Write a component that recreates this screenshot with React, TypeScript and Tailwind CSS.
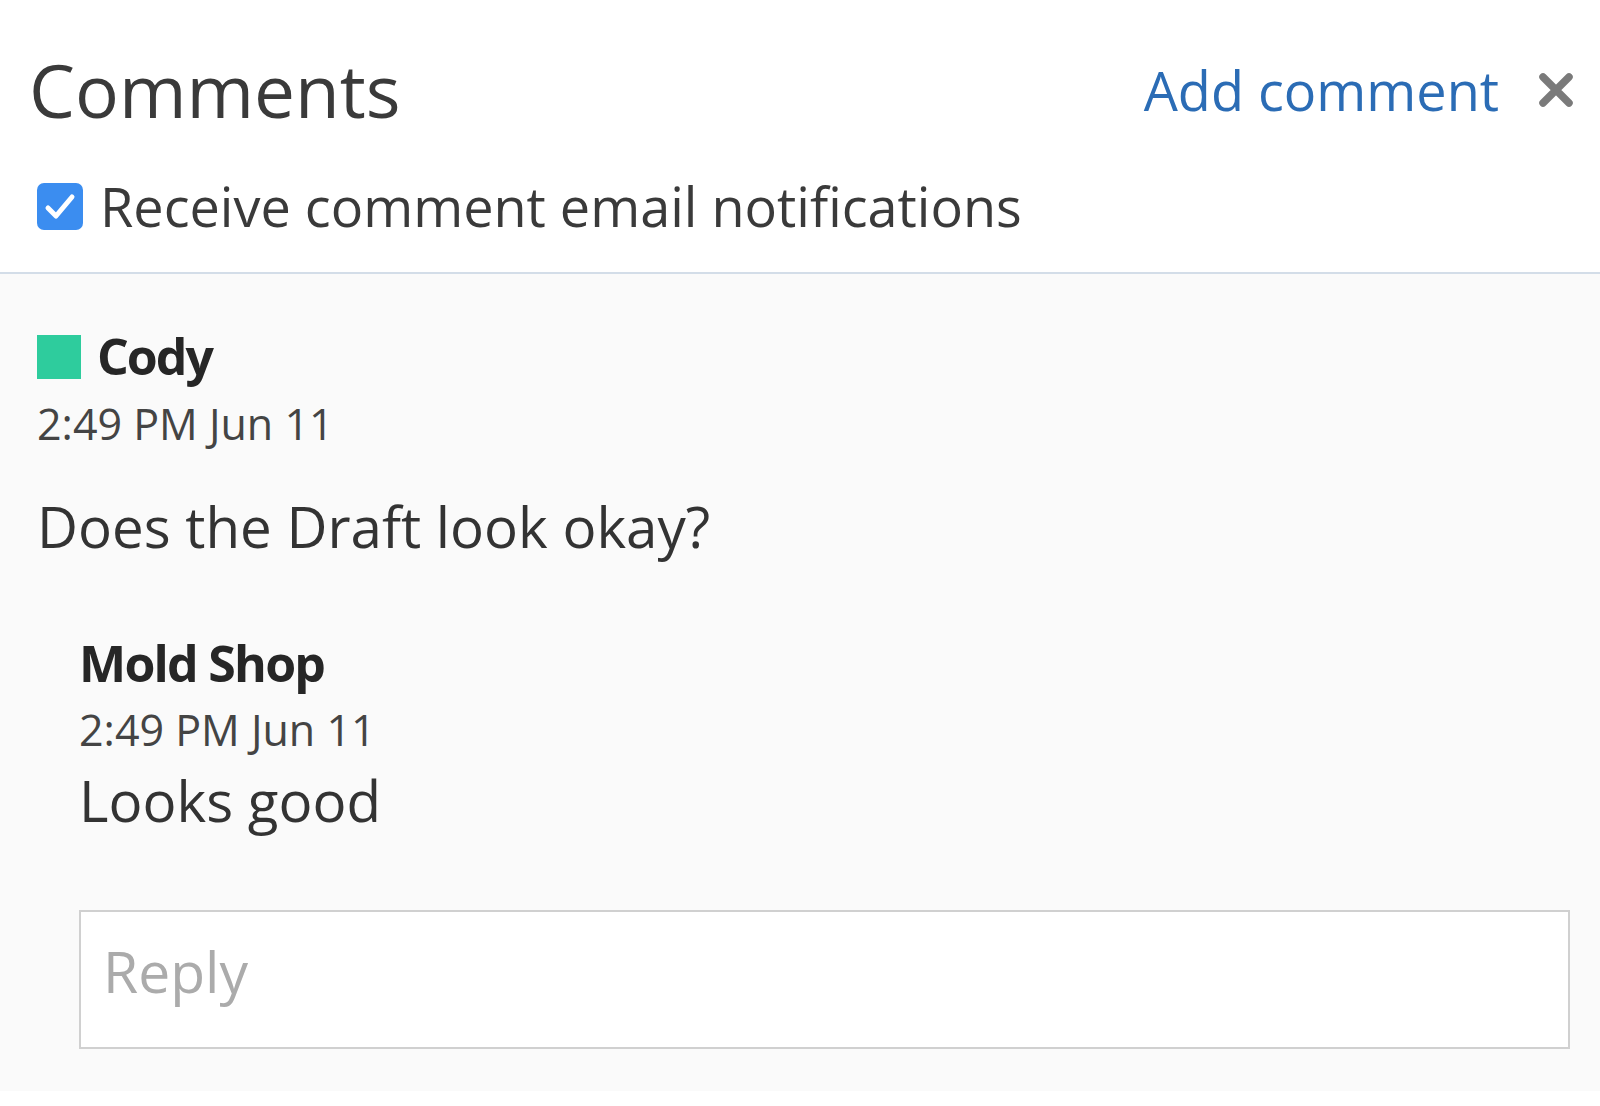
import React from 'react';

const CloseIcon: React.FC = () => (
  <svg width="38" height="36" viewBox="0 0 38 36" className="shrink-0">
    <path d="M6 5 L32 31 M32 5 L6 31" stroke="#7a7a7a" strokeWidth="7.5" strokeLinecap="round" />
  </svg>
);

const CheckBox: React.FC = () => (
  <span className="flex h-[47px] w-[46px] shrink-0 items-center justify-center rounded-[7px] bg-[#3b8df0]">
    <svg width="36" height="36" viewBox="0 0 36 36">
      <path d="M6 19 L14 27 L30 8" fill="none" stroke="#fff" strokeWidth="5" strokeLinecap="round" strokeLinejoin="round" />
    </svg>
  </span>
);

const App: React.FC = () => {
  return (
    <div className="min-h-screen bg-white font-['Open_Sans','Noto_Sans',sans-serif] text-[#333]">
      {/* header */}
      <div className="border-b-2 border-[#d3dde8] pt-[41px] pb-[30px] pl-[29px] pr-[25px]">
        <div className="flex items-center justify-between">
          <h1 className="text-[73px] leading-[98px] text-[#3a3a3a]">Comments</h1>
          <div className="flex items-center gap-[38px]">
            <a className="cursor-pointer text-[54px] leading-[72px] text-[#2b6cb5]">Add comment</a>
            <CloseIcon />
          </div>
        </div>
        <label className="mt-[32px] flex items-center gap-[17px] pl-[8px]">
          <CheckBox />
          <span className="text-[54px] leading-[71px] text-[#3a3a3a]">
            Receive comment email notifications
          </span>
        </label>
      </div>

      {/* thread */}
      <div className="bg-[#fafafa] pt-[50px] pb-[42px] pl-[37px] pr-[30px]">
        <div className="flex items-center gap-[16px]">
          <span className="h-[44px] w-[44px] shrink-0 bg-[#2ecc9d]" />
          <span className="text-[50px] font-bold leading-[65px] tracking-[-0.04em] text-[#262626]">
            Cody
          </span>
        </div>
        <div className="mt-[7px] text-[43px] leading-[55px] text-[#444]">2:49 PM Jun 11</div>
        <p className="mt-[38px] text-[56.5px] leading-[76px] text-[#333]">Does the Draft look okay?</p>

        <div className="ml-[42px] mt-[66px]">
          <div className="text-[50px] font-bold leading-[65px] tracking-[-0.035em] text-[#262626]">
            Mold Shop
          </div>
          <div className="mt-[6px] text-[43px] leading-[55px] text-[#444]">2:49 PM Jun 11</div>
          <p className="mt-[6px] text-[56.5px] leading-[76px] text-[#333]">Looks good</p>

          <textarea
            placeholder="Reply"
            className="mt-[71px] block h-[139px] w-full resize-none border-2 border-[#d0d0d0] bg-white px-[22px] py-[21px] text-[57px] leading-[76px] text-[#333] outline-none placeholder:text-[#ababab]"
          />
        </div>
      </div>
    </div>
  );
};

export default App;
